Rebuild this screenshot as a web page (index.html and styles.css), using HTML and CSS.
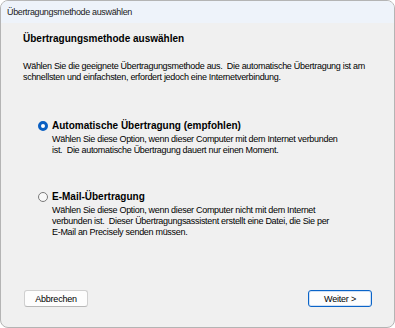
FILE: index.html
```html
<!DOCTYPE html>
<html>
<head>
  <title>Übertragungsmethode auswählen</title>
  <link rel="stylesheet" href="styles.css">
</head>
<body>
  <div class="window">
    <div class="titlebar">Übertragungsmethode auswählen</div>
    <div class="content">
      <h2>Übertragungsmethode auswählen</h2>
      <p class="intro">Wählen Sie die geeignete Übertragungsmethode aus.&nbsp; Die automatische Übertragung ist am schnellsten und einfachsten, erfordert jedoch eine Internetverbindung.</p>
      <div class="option first">
        <span class="radio checked"></span>
        <div class="option-body">
          <div class="option-label">Automatische Übertragung (empfohlen)</div>
          <div class="option-text">Wählen Sie diese Option, wenn dieser Computer mit dem Internet verbunden ist.&nbsp; Die automatische Übertragung dauert nur einen Moment.</div>
        </div>
      </div>
      <div class="option second">
        <span class="radio"></span>
        <div class="option-body">
          <div class="option-label">E-Mail-Übertragung</div>
          <div class="option-text">Wählen Sie diese Option, wenn dieser Computer nicht mit dem Internet verbunden ist.&nbsp; Dieser Übertragungsassistent erstellt eine Datei, die Sie per <span class="nobr">E-Mail</span> an Precisely senden müssen.</div>
        </div>
      </div>
    </div>
    <div class="actions">
      <button class="button">Abbrechen</button>
      <button class="button default">Weiter &gt;</button>
    </div>
  </div>
</body>
</html>
```

FILE: styles.css
```css
body { margin: 0; background: #fff; font-family: 'Liberation Sans', Arial, sans-serif; color: #000; }
.window { width: 395px; height: 328px; box-sizing: border-box; border: 1px solid #b4b4b4; border-radius: 8px; background: #f0f0f0; overflow: hidden; display: flex; flex-direction: column; }
.titlebar { height: 22px; line-height: 23px; padding-left: 6px; background: #eef3fa; font-family: 'Liberation Sans', Arial, sans-serif; font-size: 9px; letter-spacing: -0.35px; color: #1a1a1a; }
.content { flex: 1; padding: 0 22px; }
h2 { margin: 9px 0 0 0; font-size: 10px; letter-spacing: 0; font-weight: bold; line-height: 14px; }
.intro { margin: 15px 0 0 0; font-size: 9px; letter-spacing: -0.3px; line-height: 11px; }
.option { display: flex; align-items: flex-start; padding-left: 15px; }
.option.first { margin-top: 36px; }
.option.second { margin-top: 34px; }
.radio { width: 8px; height: 8px; border-radius: 50%; border: 1px solid #7a7a7a; background: #f8f8f8; margin: 2px 4px 0 0; flex: none; }
.radio.checked { border: 3px solid #0a5fc2; width: 4px; height: 4px; background: #fff; }
.option-body { width: 290px; }
.option-label { font-size: 10px; font-weight: bold; line-height: 14px; }
.option-text { font-size: 9px; letter-spacing: -0.3px; line-height: 11px; margin-top: 1px; }
.nobr { white-space: nowrap; }
.actions { display: flex; justify-content: space-between; padding: 0 22px 20px 23px; }
.button { width: 64px; height: 17px; box-sizing: border-box; border: 1px solid #d0d0d0; border-bottom-color: #b8b8b8; border-radius: 3px; background: #fdfdfd; font-family: 'Liberation Sans', Arial, sans-serif; font-size: 9px; letter-spacing: -0.2px; padding: 0; color: #000; }
.button.default { border-color: #0a64c8; box-shadow: inset 0 0 0 1px #cfe0f5; }
```
